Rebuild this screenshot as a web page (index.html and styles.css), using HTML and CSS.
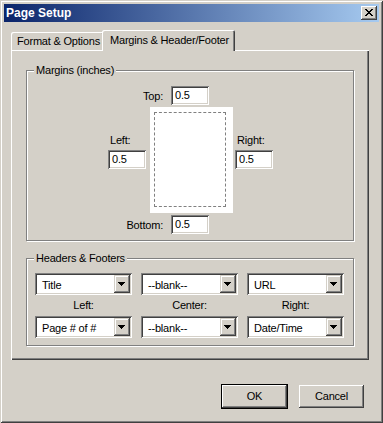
FILE: index.html
```html
<!DOCTYPE html>
<html lang="en">
<head>
    <meta charset="UTF-8">
    <title>Page Setup</title>
    <link rel="stylesheet" href="styles.css">
</head>
<body>
    <div class="window">
        <!-- Title bar -->
        <div class="titlebar">
            <span class="title">Page Setup</span>
            <div class="close-btn">
                <svg width="8" height="7" viewBox="0 0 8 7" shape-rendering="crispEdges">
                    <path fill="#000" d="M0 0h2v1H0zM6 0h2v1H6zM1 1h2v1H1zM5 1h2v1H5zM2 2h4v1H2zM3 3h2v1H3zM2 4h4v1H2zM1 5h2v1H1zM5 5h2v1H5zM0 6h2v1H0zM6 6h2v1H6z"/>
                </svg>
            </div>
        </div>

        <!-- Tabs -->
        <div class="tabs">
            <div class="tab">Format &amp; Options</div>
            <div class="tab active">Margins &amp; Header/Footer</div>
        </div>

        <div class="panel">
            <!-- Margins -->
            <div class="group margins-group">
                <span class="group-label">Margins (inches)</span>
                <div class="margins-grid">
                    <div class="edge-row">
                        <span class="edge-label">Top:</span>
                        <div class="edit">0.5</div>
                    </div>
                    <div class="side">
                        <span class="side-label">Left:</span>
                        <div class="edit">0.5</div>
                    </div>
                    <div class="page"><div class="page-margin"></div></div>
                    <div class="side right-side">
                        <span class="side-label">Right:</span>
                        <div class="edit">0.5</div>
                    </div>
                    <div class="edge-row">
                        <span class="edge-label">Bottom:</span>
                        <div class="edit">0.5</div>
                    </div>
                </div>
            </div>

            <!-- Headers & Footers -->
            <div class="group hf-group">
                <span class="group-label">Headers &amp; Footers</span>
                <div class="hf-grid">
                    <div class="combo"><span class="combo-text">Title</span><span class="combo-btn"><svg width="7" height="4" viewBox="0 0 7 4" shape-rendering="crispEdges"><path d="M0 0h7v1H0zM1 1h5v1H1zM2 2h3v1H2zM3 3h1v1H3z"/></svg></span></div>
                    <div class="combo"><span class="combo-text">--blank--</span><span class="combo-btn"><svg width="7" height="4" viewBox="0 0 7 4" shape-rendering="crispEdges"><path d="M0 0h7v1H0zM1 1h5v1H1zM2 2h3v1H2zM3 3h1v1H3z"/></svg></span></div>
                    <div class="combo"><span class="combo-text">URL</span><span class="combo-btn"><svg width="7" height="4" viewBox="0 0 7 4" shape-rendering="crispEdges"><path d="M0 0h7v1H0zM1 1h5v1H1zM2 2h3v1H2zM3 3h1v1H3z"/></svg></span></div>

                    <div class="hf-caption">Left:</div>
                    <div class="hf-caption">Center:</div>
                    <div class="hf-caption">Right:</div>

                    <div class="combo"><span class="combo-text">Page # of #</span><span class="combo-btn"><svg width="7" height="4" viewBox="0 0 7 4" shape-rendering="crispEdges"><path d="M0 0h7v1H0zM1 1h5v1H1zM2 2h3v1H2zM3 3h1v1H3z"/></svg></span></div>
                    <div class="combo"><span class="combo-text">--blank--</span><span class="combo-btn"><svg width="7" height="4" viewBox="0 0 7 4" shape-rendering="crispEdges"><path d="M0 0h7v1H0zM1 1h5v1H1zM2 2h3v1H2zM3 3h1v1H3z"/></svg></span></div>
                    <div class="combo"><span class="combo-text">Date/Time</span><span class="combo-btn"><svg width="7" height="4" viewBox="0 0 7 4" shape-rendering="crispEdges"><path d="M0 0h7v1H0zM1 1h5v1H1zM2 2h3v1H2zM3 3h1v1H3z"/></svg></span></div>
                </div>
            </div>
        </div>

        <!-- Dialog buttons -->
        <div class="buttons">
            <div class="btn default">OK</div>
            <div class="btn">Cancel</div>
        </div>
    </div>
</body>
</html>
```

FILE: styles.css
```css
* {
    margin: 0;
    padding: 0;
    box-sizing: border-box;
}
body {
    font-family: "Liberation Sans", Arial, sans-serif;
    font-size: 11px;
    letter-spacing: -0.2px;
    color: #000;
    background-color: #d4d0c8;
}
.window {
    width: 383px;
    height: 423px;
    padding: 4px;
    background-color: #d4d0c8;
    box-shadow: inset 1px 1px #d4d0c8, inset -1px -1px #404040, inset 2px 2px #fff, inset -2px -2px #808080;
}
.titlebar {
    height: 18px;
    display: flex;
    align-items: center;
    justify-content: space-between;
    padding: 0 2px 0 2px;
    background: linear-gradient(to right, #0a246a, #a6caf0);
}
.title {
    color: #fff;
    font-weight: bold;
    font-size: 12px;
    letter-spacing: 0;
    line-height: 18px;
}
.close-btn {
    width: 16px;
    height: 14px;
    display: flex;
    align-items: center;
    justify-content: center;
    padding-bottom: 1px;
    background-color: #d4d0c8;
    box-shadow: inset -1px -1px #404040, inset 1px 1px #fff, inset -2px -2px #808080;
}
.close-btn svg {
    display: block;
}

/* Tabs */
.tabs {
    position: relative;
    z-index: 1;
    display: flex;
    align-items: flex-end;
    height: 20px;
    margin: 8px 0 0 7px;
}
.tab {
    width: 93px;
    height: 18px;
    padding-left: 6px;
    line-height: 18px;
    white-space: nowrap;
    background-color: #d4d0c8;
    border-radius: 2px 2px 0 0;
    box-shadow: inset 1px 1px #fff, inset -1px 0 #404040, inset -2px 0 #808080;
}
.tab.active {
    width: 133px;
    height: 21px;
    margin-left: -2px;
    margin-bottom: -1px;
    padding-left: 8px;
    line-height: 20px;
}
.panel {
    width: 358px;
    height: 310px;
    margin-left: 7px;
    padding: 20px 15px 0;
    box-shadow: inset 1px 1px #fff, inset -1px -1px #404040, inset -2px -2px #808080;
}

/* Group boxes */
.group {
    position: relative;
    border: 1px solid #808080;
    box-shadow: inset 1px 1px #fff, 1px 1px #fff;
}
.group-label {
    position: absolute;
    top: -8px;
    left: 7px;
    padding: 0 2px;
    line-height: 14px;
    background-color: #d4d0c8;
}
.margins-group {
    padding: 15px 0 6px 81px;
}
.margins-grid {
    display: grid;
    grid-template-columns: 42px 83px 40px;
    grid-template-rows: 19px 106px 19px;
    row-gap: 2px;
}
.edge-row {
    grid-column: 1 / -1;
    display: flex;
    align-items: center;
}
.edge-label {
    width: 55px;
    margin-right: 8px;
    text-align: right;
}
.edit {
    width: 38px;
    height: 19px;
    padding-left: 4px;
    line-height: 19px;
    background-color: #fff;
    box-shadow: inset 1px 1px #808080, inset -1px -1px #fff, inset 2px 2px #404040, inset -2px -2px #d4d0c8;
}
.side {
    display: flex;
    flex-direction: column;
    gap: 3px;
    padding-top: 27px;
}
.right-side {
    padding-left: 2px;
}
.side-label {
    padding-left: 2px;
    line-height: 13px;
}
.page {
    padding: 5px 7px 6px 4px;
    background-color: #fff;
}
.page-margin {
    height: 100%;
    border: 1px dashed #808080;
}

/* Headers & footers */
.hf-group {
    margin-top: 17px;
    padding: 14px 0 7px 8px;
}
.hf-grid {
    display: grid;
    grid-template-columns: repeat(3, 97px);
    grid-template-rows: 22px 21px 22px;
    column-gap: 9px;
}
.hf-caption {
    text-align: center;
    line-height: 21px;
}
.combo {
    display: flex;
    height: 22px;
    padding: 2px;
    background-color: #fff;
    box-shadow: inset 1px 1px #808080, inset -1px -1px #fff, inset 2px 2px #404040, inset -2px -2px #d4d0c8;
}
.combo-text {
    flex: 1;
    padding: 1px 0 0 5px;
    line-height: 18px;
    white-space: nowrap;
}
.combo-btn {
    width: 16px;
    height: 18px;
    display: flex;
    align-items: center;
    justify-content: center;
    padding-right: 1px;
    background-color: #d4d0c8;
    box-shadow: inset -1px -1px #404040, inset 1px 1px #d4d0c8, inset -2px -2px #808080, inset 2px 2px #fff;
}
.combo-btn svg {
    display: block;
}

/* Dialog buttons */
.buttons {
    display: flex;
    justify-content: flex-end;
    gap: 12px;
    margin-top: 25px;
    padding-right: 15px;
}
.btn {
    width: 65px;
    height: 23px;
    line-height: 22px;
    text-align: center;
    background-color: #d4d0c8;
    box-shadow: inset -1px -1px #404040, inset 1px 1px #fff, inset -2px -2px #808080;
}
.btn.default {
    box-shadow: 0 0 0 1px #000, inset -1px -1px #404040, inset 1px 1px #fff, inset -2px -2px #808080;
}
```
